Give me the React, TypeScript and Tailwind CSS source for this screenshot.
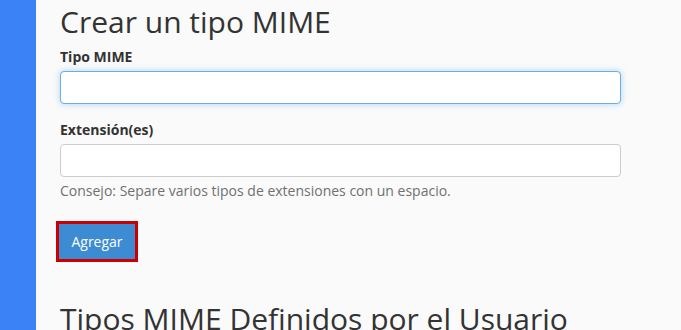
import React from 'react';

const App: React.FC = () => {
  return (
    <div className="flex h-[330px] w-[681px] overflow-hidden bg-[#fafafa] font-['Open_Sans',sans-serif] text-[#333]">
      <div className="w-[36px] shrink-0 bg-[#3b82f6]" />
      <div className="flex-1 pl-[24px] pr-[60px]">
        <h1 className="mt-[2px] text-[30px] leading-[40px] text-[#333]">Crear un tipo MIME</h1>

        <div className="mt-[5px]">
          <label className="block text-[14px] font-bold leading-[20px]">Tipo MIME</label>
          <input
            type="text"
            className="mt-[4px] block h-[33px] w-full rounded-[4px] border border-[#66afe9] bg-white px-3 shadow-[0_0_6px_rgba(102,175,233,0.5)] outline-none"
          />
        </div>

        <div className="mt-[16px]">
          <label className="block text-[14px] font-bold leading-[20px]">Extensión(es)</label>
          <input
            type="text"
            className="mt-[4px] block h-[33px] w-full rounded-[4px] border border-[#ccc] bg-white px-3 outline-none"
          />
          <p className="mt-[4px] text-[14px] leading-[20px] text-[#707070]">
            Consejo: Separe varios tipos de extensiones con un espacio.
          </p>
        </div>

        <div className="mt-[20px] ml-[-4px] inline-block border-[3px] border-[#cc0000]">
          <button className="block h-[35px] w-[76px] bg-[#3d8bd2] text-[14px] text-white">
            Agregar
          </button>
        </div>

        <h2 className="mt-[37px] whitespace-nowrap text-[30px] leading-[40px] text-[#333]">
          Tipos MIME Definidos por el Usuario
        </h2>
      </div>
    </div>
  );
};

export default App;
